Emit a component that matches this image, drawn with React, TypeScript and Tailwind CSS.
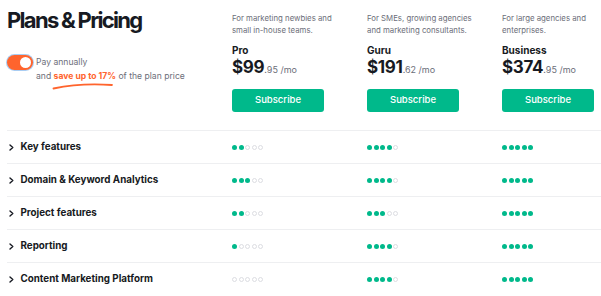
const plans = [
  {
    name: "Pro",
    desc: ["For marketing newbies and", "small in-house teams."],
    price: "$99",
    cents: ".95 /mo",
  },
  {
    name: "Guru",
    desc: ["For SMEs, growing agencies", "and marketing consultants."],
    price: "$191",
    cents: ".62 /mo",
  },
  {
    name: "Business",
    desc: ["For large agencies and", "enterprises."],
    price: "$374",
    cents: ".95 /mo",
  },
];

const features = [
  { label: "Key features", scores: [2, 4, 5] },
  { label: "Domain & Keyword Analytics", scores: [3, 4, 5] },
  { label: "Project features", scores: [2, 3, 5] },
  { label: "Reporting", scores: [1, 4, 5] },
  { label: "Content Marketing Platform", scores: [0, 4, 5] },
];

function Dots({ value }: { value: number }) {
  return (
    <div className="flex gap-[1.6px]">
      {[0, 1, 2, 3, 4].map((i) =>
        i < value ? (
          <span key={i} className="w-[5px] h-[5px] rounded-full bg-[#00b98b]" />
        ) : (
          <span
            key={i}
            className="w-[5px] h-[5px] rounded-full border border-[#dcdde2] bg-white"
          />
        )
      )}
    </div>
  );
}

function Chevron() {
  return (
    <svg width="5" height="7" viewBox="0 0 5 7" className="mr-[7px]">
      <polyline
        points="1,1 3.8,3.5 1,6"
        fill="none"
        stroke="#171a22"
        strokeWidth="1.4"
        strokeLinecap="round"
        strokeLinejoin="round"
      />
    </svg>
  );
}

export default function App() {
  return (
    <div className="w-full h-[296px] overflow-hidden bg-white font-['Inter',sans-serif] text-[#171a22]">
      <div className="flex h-[130px] pl-[7px]">
        <div className="w-[225px] shrink-0 pt-[5px]">
          <h1 className="text-[22px] leading-[30px] font-bold tracking-[-1.7px]">
            Plans &amp; Pricing
          </h1>
          <div className="mt-[20px] flex items-start">
            <div className="w-[26px] h-[15px] rounded-full bg-[#ff642d] ring-1 ring-[#a9cdf3] flex items-center justify-end pr-[2px] shrink-0">
              <span className="w-[11px] h-[11px] rounded-full bg-white" />
            </div>
            <div className="ml-[3px] text-[8.6px] text-[#6c6e79] leading-[14px]">
              <div>Pay annually</div>
              <div className="relative">
                and{" "}
                <span className="relative font-bold text-[#ff642d]">
                  save up to 17%
                  <svg
                    width="62"
                    height="8"
                    viewBox="0 0 62 8"
                    className="absolute left-[-2px] top-[11px]"
                  >
                    <path
                      d="M1.5 6.5 C 18 3, 40 1.5, 60 3"
                      fill="none"
                      stroke="#ff642d"
                      strokeWidth="1.8"
                      strokeLinecap="round"
                    />
                  </svg>
                </span>{" "}
                of the plan price
              </div>
            </div>
          </div>
        </div>
        {plans.map((p) => (
          <div key={p.name} className="w-[135px] shrink-0 pt-[12px]">
            <div className="text-[7.8px] leading-[12px] text-[#6c6e79]">
              <div>{p.desc[0]}</div>
              <div>{p.desc[1]}</div>
            </div>
            <div className="mt-[7px] text-[10px] leading-[14px] font-bold">
              {p.name}
            </div>
            <div className="flex items-baseline leading-[20px]">
              <span className="text-[17px] font-bold tracking-[-0.3px]">
                {p.price}
              </span>
              <span className="text-[9px] text-[#6c6e79]">{p.cents}</span>
            </div>
            <button className="mt-[9px] w-[92px] h-[23px] rounded-[3px] bg-[#00b98b] text-white text-[9.5px] font-medium">
              Subscribe
            </button>
          </div>
        ))}
      </div>
      <div className="pl-[7px]">
        {features.map((f) => (
          <div
            key={f.label}
            className="flex items-center h-[33px] border-t border-[#eeeff1]"
          >
            <div className="w-[225px] shrink-0 flex items-center pl-[1.5px] pt-[1px] text-[9.8px] font-bold">
              <Chevron />
              {f.label}
            </div>
            {f.scores.map((s, i) => (
              <div key={i} className="w-[135px] shrink-0 pt-[1px]">
                <Dots value={s} />
              </div>
            ))}
          </div>
        ))}
      </div>
    </div>
  );
}
